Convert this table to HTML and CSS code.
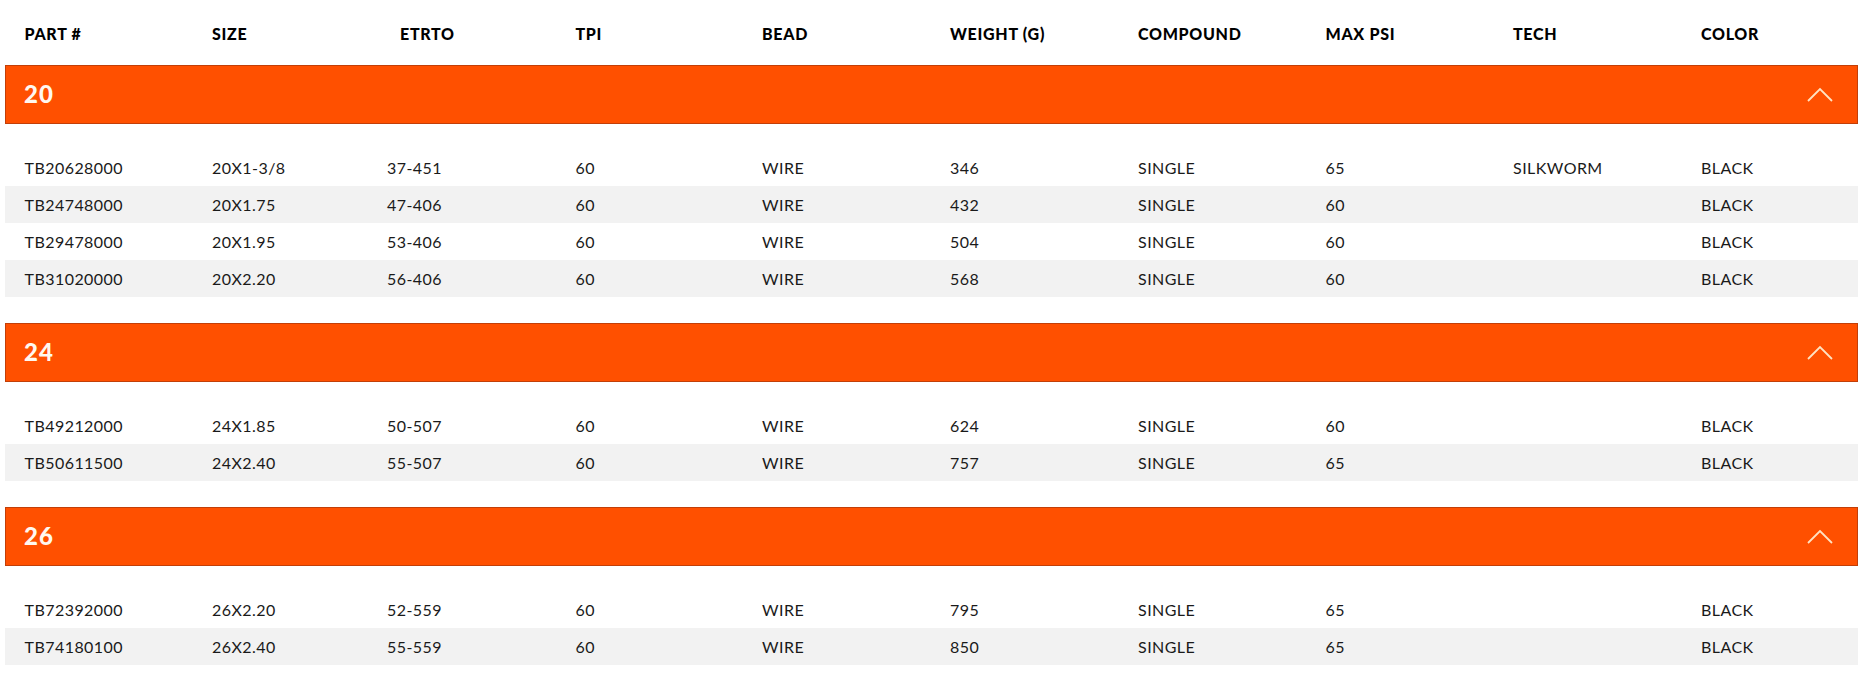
FILE: index.html
```html
<!DOCTYPE html>
<html lang="en">
<head>
<meta charset="utf-8">
<title>Tire specs</title>
<link rel="stylesheet" href="styles.css">
</head>
<body>
<div class="wrap">
  <div class="grid head">
    <div>PART #</div>
    <div>SIZE</div>
    <div class="etrto-head">ETRTO</div>
    <div>TPI</div>
    <div>BEAD</div>
    <div>WEIGHT (G)</div>
    <div>COMPOUND</div>
    <div>MAX PSI</div>
    <div>TECH</div>
    <div>COLOR</div>
  </div>

  <section class="group">
    <div class="bar"><span class="bar-title">20</span><svg class="chev" width="26" height="15" viewBox="0 0 26 15"><polyline points="1,14 13,2 25,14" fill="none" stroke="#ffe3c2" stroke-width="1.8"/></svg></div>
    <div class="rows">
      <div class="grid row"><div>TB20628000</div><div>20X1-3/8</div><div>37-451</div><div>60</div><div>WIRE</div><div>346</div><div>SINGLE</div><div>65</div><div>SILKWORM</div><div>BLACK</div></div>
      <div class="grid row"><div>TB24748000</div><div>20X1.75</div><div>47-406</div><div>60</div><div>WIRE</div><div>432</div><div>SINGLE</div><div>60</div><div></div><div>BLACK</div></div>
      <div class="grid row"><div>TB29478000</div><div>20X1.95</div><div>53-406</div><div>60</div><div>WIRE</div><div>504</div><div>SINGLE</div><div>60</div><div></div><div>BLACK</div></div>
      <div class="grid row"><div>TB31020000</div><div>20X2.20</div><div>56-406</div><div>60</div><div>WIRE</div><div>568</div><div>SINGLE</div><div>60</div><div></div><div>BLACK</div></div>
    </div>
  </section>

  <section class="group">
    <div class="bar"><span class="bar-title">24</span><svg class="chev" width="26" height="15" viewBox="0 0 26 15"><polyline points="1,14 13,2 25,14" fill="none" stroke="#ffe3c2" stroke-width="1.8"/></svg></div>
    <div class="rows">
      <div class="grid row"><div>TB49212000</div><div>24X1.85</div><div>50-507</div><div>60</div><div>WIRE</div><div>624</div><div>SINGLE</div><div>60</div><div></div><div>BLACK</div></div>
      <div class="grid row"><div>TB50611500</div><div>24X2.40</div><div>55-507</div><div>60</div><div>WIRE</div><div>757</div><div>SINGLE</div><div>65</div><div></div><div>BLACK</div></div>
    </div>
  </section>

  <section class="group">
    <div class="bar"><span class="bar-title">26</span><svg class="chev" width="26" height="15" viewBox="0 0 26 15"><polyline points="1,14 13,2 25,14" fill="none" stroke="#ffe3c2" stroke-width="1.8"/></svg></div>
    <div class="rows">
      <div class="grid row"><div>TB72392000</div><div>26X2.20</div><div>52-559</div><div>60</div><div>WIRE</div><div>795</div><div>SINGLE</div><div>65</div><div></div><div>BLACK</div></div>
      <div class="grid row"><div>TB74180100</div><div>26X2.40</div><div>55-559</div><div>60</div><div>WIRE</div><div>850</div><div>SINGLE</div><div>65</div><div></div><div>BLACK</div></div>
    </div>
  </section>
</div>
</body>
</html>
```
FILE: styles.css
```css
html, body {
  margin: 0;
  padding: 0;
  background: #ffffff;
}
body {
  font-family: "Lato", "Liberation Sans", sans-serif;
  color: #1a1a1a;
}
.wrap {
  padding: 0 6px 0 5px;
}
.grid {
  display: grid;
  grid-template-columns: 187.5px 175px 188.5px 186.5px 188px 188px 187.5px 187.5px 188px 1fr;
  padding-left: 19.5px;
  align-items: center;
}
.head {
  box-sizing: border-box;
  height: 65px;
  padding-top: 1px;
  font-weight: 900;
  font-size: 16px;
  color: #000;
  letter-spacing: 0.7px;
}
.etrto-head {
  padding-left: 13px;
}
.bar {
  box-sizing: border-box;
  height: 59px;
  background: #ff5000;
  border: 1px solid #c23f08;
  display: flex;
  align-items: center;
  justify-content: space-between;
  padding: 0 24px 0 18px;
}
.bar-title {
  color: #fff8f0;
  font-weight: 900;
  font-size: 24px;
  letter-spacing: 1px;
  position: relative;
  top: -1px;
}
.chev {
  display: block;
}
.rows {
  padding: 25px 0 26px;
}
.row {
  height: 37px;
  font-size: 16px;
  font-weight: 400;
  letter-spacing: 0.45px;
}
.row:nth-child(even) {
  background: #f2f2f2;
}
```
